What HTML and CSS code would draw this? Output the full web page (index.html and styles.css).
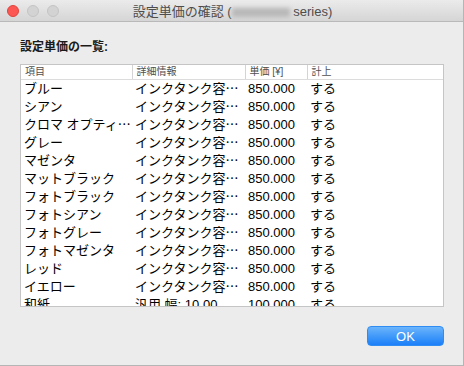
FILE: index.html
```html
<!DOCTYPE html>
<html lang="ja">
<head>
    <meta charset="UTF-8">
    <title>設定単価の確認</title>
    <link rel="stylesheet" href="styles.css">
</head>
<body>
    <div class="window">
        <div class="titlebar">
            <div class="lights">
                <span class="light close"></span>
                <span class="light"></span>
                <span class="light"></span>
            </div>
            <div class="title">設定単価の確認 (<span class="blur"></span> series)</div>
        </div>
        <div class="content">
            <div class="label">設定単価の一覧:</div>
            <div class="list">
                <table>
                    <colgroup>
                        <col class="c1"><col class="c2"><col class="c3"><col>
                    </colgroup>
                    <thead>
                        <tr><th>項目</th><th>詳細情報</th><th>単価 [¥]</th><th>計上</th></tr>
                    </thead>
                    <tbody>
                        <tr><td>ブルー</td><td>インクタンク容<span class="more">…</span></td><td>850.000</td><td>する</td></tr>
                        <tr><td>シアン</td><td>インクタンク容<span class="more">…</span></td><td>850.000</td><td>する</td></tr>
                        <tr><td>クロマ オプティ<span class="more">…</span></td><td>インクタンク容<span class="more">…</span></td><td>850.000</td><td>する</td></tr>
                        <tr><td>グレー</td><td>インクタンク容<span class="more">…</span></td><td>850.000</td><td>する</td></tr>
                        <tr><td>マゼンタ</td><td>インクタンク容<span class="more">…</span></td><td>850.000</td><td>する</td></tr>
                        <tr><td>マットブラック</td><td>インクタンク容<span class="more">…</span></td><td>850.000</td><td>する</td></tr>
                        <tr><td>フォトブラック</td><td>インクタンク容<span class="more">…</span></td><td>850.000</td><td>する</td></tr>
                        <tr><td>フォトシアン</td><td>インクタンク容<span class="more">…</span></td><td>850.000</td><td>する</td></tr>
                        <tr><td>フォトグレー</td><td>インクタンク容<span class="more">…</span></td><td>850.000</td><td>する</td></tr>
                        <tr><td>フォトマゼンタ</td><td>インクタンク容<span class="more">…</span></td><td>850.000</td><td>する</td></tr>
                        <tr><td>レッド</td><td>インクタンク容<span class="more">…</span></td><td>850.000</td><td>する</td></tr>
                        <tr><td>イエロー</td><td>インクタンク容<span class="more">…</span></td><td>850.000</td><td>する</td></tr>
                        <tr><td>和紙</td><td>汎用 幅: 10.00</td><td>100.000</td><td>する</td></tr>
                    </tbody>
                </table>
            </div>
            <div class="footer">
                <button class="ok">OK</button>
            </div>
        </div>
    </div>
</body>
</html>
```

FILE: styles.css
```css
body {
    margin: 0;
    background-color: #ececec;
    font-family: "Liberation Sans", "Noto Sans CJK JP", sans-serif;
}
.window {
    width: 464px;
    height: 366px;
    box-sizing: border-box;
    background-color: #ececec;
    border-right: 1px solid #b5b5b5;
    border-bottom: 1px solid #b5b5b5;
    display: flex;
    flex-direction: column;
}
.titlebar {
    height: 22px;
    box-sizing: border-box;
    background: linear-gradient(#ebebeb, #d5d5d5);
    border-bottom: 1px solid #b9b9b9;
    display: flex;
    align-items: center;
    position: relative;
}
.lights {
    display: flex;
    gap: 8px;
    padding-left: 7px;
}
.light {
    width: 12px;
    height: 12px;
    border-radius: 50%;
    box-sizing: border-box;
    background-color: #d3d3d3;
    border: 1px solid #c4c4c4;
}
.light.close {
    background-color: #fc5753;
    border-color: #e0443e;
}
.title {
    position: absolute;
    left: 0;
    right: 0;
    text-align: center;
    font-size: 13px;
    color: #4d4d4d;
    padding-left: 2px;
}
.blur {
    display: inline-block;
    width: 58px;
    height: 9px;
    background-color: #b8b8b8;
    filter: blur(2px);
    vertical-align: -1px;
}
.content {
    flex: 1;
    display: flex;
    flex-direction: column;
    padding: 17px 19px 19px 20px;
}
.label {
    font-size: 12px;
    line-height: 16px;
    color: #1a1a1a;
    font-weight: bold;
    margin-bottom: 9px;
}
.list {
    height: 243px;
    box-sizing: border-box;
    background-color: #fff;
    border: 1px solid #c5c5c5;
    overflow: hidden;
}
table {
    width: 100%;
    table-layout: fixed;
    border-collapse: collapse;
}
.c1 { width: 111px; }
.c2 { width: 113px; }
.c3 { width: 62px; }
th {
    font-size: 10px;
    font-weight: normal;
    color: #505050;
    text-align: left;
    height: 14px;
    padding: 0 0 0 4px;
    border-bottom: 1px solid #dcdcdc;
    line-height: 14px;
}
th + th {
    border-left: 1px solid #d4d4d4;
}
td {
    font-size: 13px;
    color: #000;
    height: 18px;
    line-height: 18px;
    padding: 0 0 0 3px;
    white-space: nowrap;
}
td + td {
    padding-left: 3px;
}
.more {
    font-family: "Noto Sans CJK JP", sans-serif;
    line-height: 15px;
    vertical-align: top;
}
.footer {
    display: flex;
    justify-content: flex-end;
    margin-top: 19px;
}
.ok {
    width: 77px;
    height: 20px;
    border: 1px solid #2f8cf3;
    border-radius: 4px;
    background: linear-gradient(#6ab4fb, #1b7ff8);
    color: #fff;
    font-family: "Liberation Sans", sans-serif;
    font-size: 13px;
    padding: 0;
}
```
